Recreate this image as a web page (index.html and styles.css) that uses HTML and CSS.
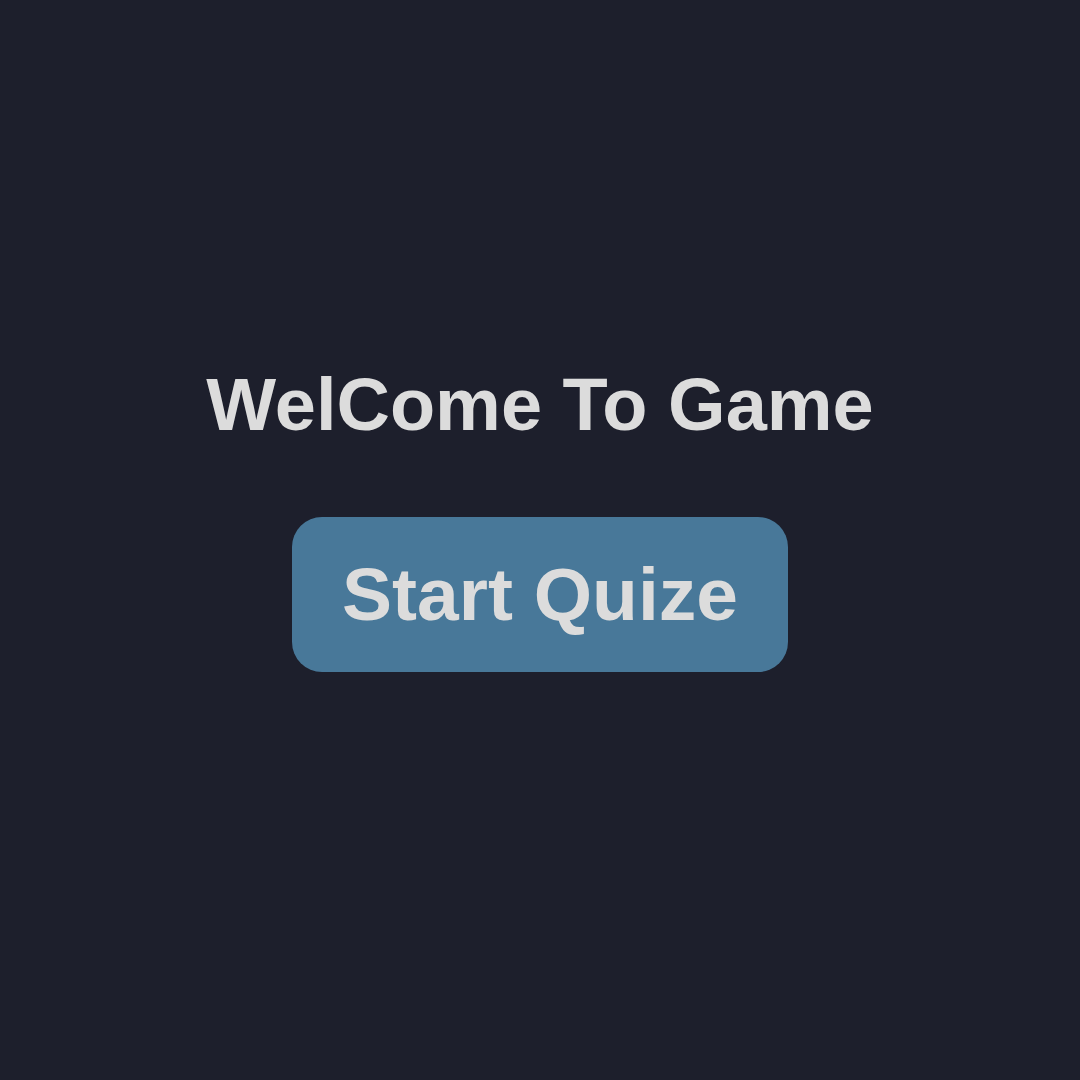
FILE: index.html
```html
<!DOCTYPE html>
<html lang="en">
<head>
<meta charset="utf-8">
<title>Quiz</title>
<link rel="stylesheet" href="styles.css">
</head>
<body>
<main class="welcome">
  <h1 class="welcome-title">WelCome To Game</h1>
  <button class="start-btn" type="button">Start Quize</button>
</main>
</body>
</html>
```
FILE: styles.css
```css
html, body {
  margin: 0;
  padding: 0;
  background: #1d1f2c;
}
.welcome {
  min-height: 100vh;
  box-sizing: border-box;
  display: flex;
  flex-direction: column;
  align-items: center;
  justify-content: center;
  gap: 70px;
  padding-bottom: 46px;
  font-family: "Liberation Sans", Arial, sans-serif;
}
.welcome-title {
  margin: 0;
  font-size: 74px;
  font-weight: 700;
  line-height: normal;
  color: #dcdcdc;
}
.start-btn {
  font-family: inherit;
  font-size: 75px;
  font-weight: 700;
  line-height: normal;
  color: #dcdcdc;
  background: #487899;
  border: none;
  border-radius: 30px;
  padding: 34px 50px 35px;
  cursor: pointer;
}
```
